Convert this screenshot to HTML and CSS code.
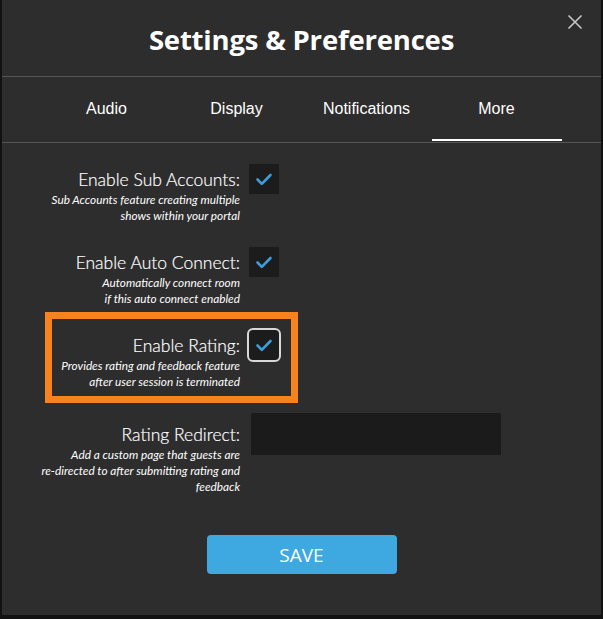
FILE: index.html
```html
<!DOCTYPE html>
<html lang="en">
<head>
<meta charset="utf-8">
<title>Settings &amp; Preferences</title>
<link rel="stylesheet" href="styles.css">
</head>
<body>
<div class="modal">
  <header class="modal-header">
    <h1 class="modal-title">Settings &amp; Preferences</h1>
    <button class="close-btn" aria-label="Close">
      <svg width="16" height="16" viewBox="0 0 16 16"><path d="M1.5 1.5 L14.5 14.5 M14.5 1.5 L1.5 14.5" stroke="#c8c8c8" stroke-width="1.6" fill="none"/></svg>
    </button>
  </header>
  <nav class="tabs">
    <div class="tab">Audio</div>
    <div class="tab">Display</div>
    <div class="tab">Notifications</div>
    <div class="tab active">More</div>
  </nav>
  <div class="modal-body">
    <div class="field">
      <div class="field-text">
        <div class="field-label">Enable Sub Accounts:</div>
        <div class="field-desc">Sub Accounts feature creating multiple<br>shows within your portal</div>
      </div>
      <div class="checkbox">
        <svg width="30" height="30" viewBox="0 0 30 30"><path d="M8.5 15.5 L12.8 19.8 L21.5 11" stroke="#3b9fdc" stroke-width="2.6" fill="none" stroke-linecap="round" stroke-linejoin="round"/></svg>
      </div>
    </div>
    <div class="field">
      <div class="field-text">
        <div class="field-label">Enable Auto Connect:</div>
        <div class="field-desc">Automatically connect room<br>if this auto connect enabled</div>
      </div>
      <div class="checkbox">
        <svg width="30" height="30" viewBox="0 0 30 30"><path d="M8.5 15.5 L12.8 19.8 L21.5 11" stroke="#3b9fdc" stroke-width="2.6" fill="none" stroke-linecap="round" stroke-linejoin="round"/></svg>
      </div>
    </div>
    <div class="field field-highlighted">
      <div class="highlight"></div>
      <div class="field-text">
        <div class="field-label">Enable Rating:</div>
        <div class="field-desc">Provides rating and feedback feature<br>after user session is terminated</div>
      </div>
      <div class="checkbox focused">
        <svg width="30" height="30" viewBox="0 0 30 30"><path d="M8.5 15.5 L12.8 19.8 L21.5 11" stroke="#3b9fdc" stroke-width="2.6" fill="none" stroke-linecap="round" stroke-linejoin="round"/></svg>
      </div>
    </div>
    <div class="field field-input">
      <div class="field-text">
        <div class="field-label">Rating Redirect:</div>
        <div class="field-desc">Add a custom page that guests are<br>re-directed to after submitting rating and<br>feedback</div>
      </div>
      <div class="text-input"></div>
    </div>
  </div>
  <footer class="modal-footer">
    <button class="save-btn">SAVE</button>
  </footer>
</div>
</body>
</html>
```

FILE: styles.css
```css
html, body {
  margin: 0;
  padding: 0;
  background: #121212;
  height: 100%;
}
body {
  font-family: "Lato", "Open Sans", sans-serif;
  color: #fff;
}
.modal {
  margin-left: 2px;
  width: 599px;
  height: 615px;
  background: #2d2d2d;
  position: relative;
  box-sizing: border-box;
}
.modal-header {
  height: 77px;
  display: flex;
  align-items: center;
  justify-content: center;
  border-bottom: 1px solid #555;
  box-sizing: border-box;
}
.modal-title {
  margin: 0;
  font-family: "Open Sans", sans-serif;
  font-weight: 700;
  font-size: 27.5px;
  color: #fff;
  padding-top: 2px;
  letter-spacing: -0.2px;
}
.close-btn {
  position: absolute;
  top: 14px;
  right: 18px;
  width: 16px;
  height: 16px;
  padding: 0;
  border: 0;
  background: none;
  display: flex;
}
.tabs {
  display: flex;
  justify-content: center;
  height: 66px;
  border-bottom: 1px solid #555;
  box-sizing: border-box;
}
.tab {
  width: 130px;
  display: flex;
  align-items: center;
  justify-content: center;
  font-family: "Liberation Sans", Arial, sans-serif;
  font-size: 16px;
  color: #fff;
  box-sizing: border-box;
  padding-bottom: 0;
  margin-bottom: 1px;
}
.tab.active {
  border-bottom: 2px solid #fff;
  padding-top: 2px;
}
.modal-body {
  padding: 21px 0 0 38px;
}
.field {
  display: flex;
  align-items: flex-start;
  gap: 9px;
  height: 58px;
  margin-bottom: 25px;
  position: relative;
}
.field-text {
  width: 200px;
  text-align: right;
}
.field-label {
  margin-top: 4px;
  font-size: 17.5px;
  line-height: 24px;
  font-weight: 300;
  color: #fff;
  -webkit-text-stroke: 0.2px #fff;
}
.field-desc {
  font-size: 11.8px;
  line-height: 15.5px;
  font-style: italic;
  font-weight: 400;
  white-space: nowrap;
  color: #fff;
}
.checkbox {
  width: 30px;
  height: 30px;
  background: #1c1c1c;
  display: flex;
  box-sizing: border-box;
}
.checkbox.focused {
  outline: 2px solid #d8d8d8;
  outline-offset: 0;
  border-radius: 4px;
}
.highlight {
  position: absolute;
  left: 5px;
  top: -18px;
  width: 253px;
  height: 91px;
  border: 7px solid #f7831f;
  box-sizing: border-box;
}
.field-input {
  height: 82px;
}
.field-input .field-label {
  margin-top: 10px;
}
.field-input .field-text {
  width: 203px;
  margin-left: -3px;
}
.field-input .field-desc {
  line-height: 16px;
}
.text-input {
  width: 250px;
  height: 42px;
  background: #1b1b1b;
  margin-left: 2px;
}
.modal-footer {
  display: flex;
  justify-content: center;
  padding-top: 15px;
}
.save-btn {
  width: 190px;
  height: 39px;
  background: #3ea8e0;
  border: 0;
  border-radius: 4px;
  color: #fff;
  font-family: "Open Sans", sans-serif;
  font-size: 19px;
  padding: 0;
}
```
